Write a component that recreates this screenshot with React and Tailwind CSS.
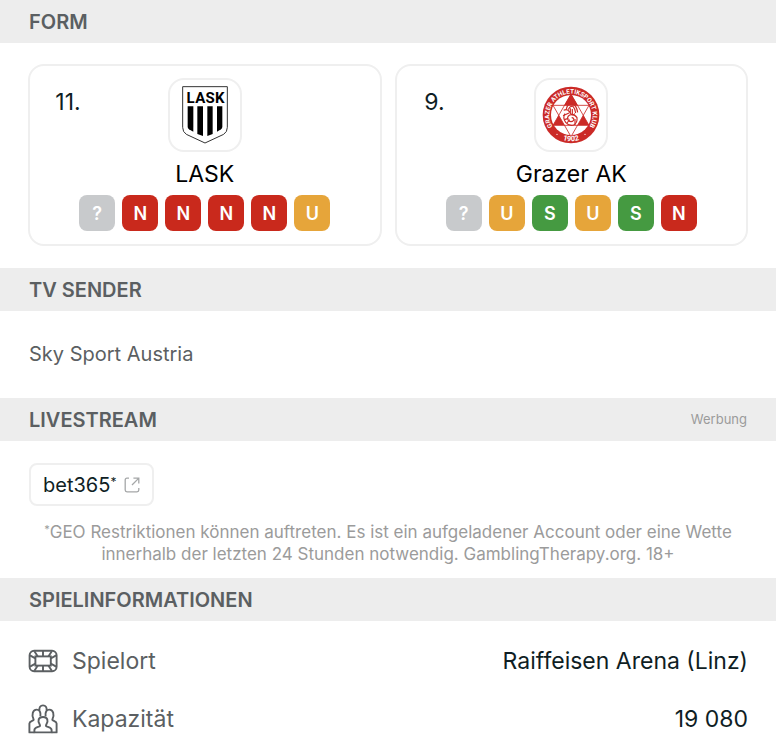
import React from "react";

const teams = [
  { rank: "11.", name: "LASK", logo: LaskLogo, form: ["?", "N", "N", "N", "N", "U"] },
  { rank: "9.", name: "Grazer AK", logo: GakLogo, form: ["?", "U", "S", "U", "S", "N"] },
];

const formColors = {
  "?": "bg-[#c8cacc]",
  N: "bg-[#c9291c]",
  U: "bg-[#e6a53a]",
  S: "bg-[#459a41]",
};

function LaskLogo() {
  return (
    <svg viewBox="48 33 144 180" className="w-12 h-[60px]" role="img" aria-label="LASK">
      <path
        d="M53 38H187V160Q187 174 176 181L120 207L64 181Q53 174 53 160Z"
        fill="#fff"
        stroke="#333"
        strokeWidth="3"
      />
      <text
        x="77 106 135 164"
        y="87"
        textAnchor="middle"
        fontFamily="Roboto, sans-serif"
        fontWeight="700"
        fontSize="45"
      >
        LASK
      </text>
      <path d="M68 97H85V173L72 166Q68 163 68 158Z" />
      <path d="M97 97H114V186L97 180Z" />
      <path d="M127 97H143V180L127 186Z" />
      <path d="M156 97H172V158Q172 163 168 166L156 173Z" />
    </svg>
  );
}

function GakLogo() {
  return (
    <svg viewBox="-87 -87 174 174" className="w-[58px] h-[58px]" role="img" aria-label="Grazer AK">
      <defs>
        <path id="gak-top" d="M-50 42A65 65 0 1 1 50 42" />
        <path id="gak-bottom" d="M-40 68A79 79 0 0 0 40 68" />
      </defs>
      <circle r="85" fill="#cb2a27" />
      <circle r="60" fill="#fff" />
      <path d="M0-63L54 31H-54Z" fill="#cb2a27" />
      <path d="M-54-29H54L0 65Z" fill="#fff" stroke="#cb2a27" strokeWidth="2.5" />
      <path d="M-54 31H54" stroke="#cb2a27" strokeWidth="2.5" />
      <path d="M0-63L54 31M0-63L-54 31" stroke="#cb2a27" strokeWidth="2.5" />
      <path d="M-20-29L0-62L20-29Z" fill="#cb2a27" />
      <g fill="none" stroke="#cb2a27" strokeWidth="3.5">
        <path d="M-14-18Q-10-36 4-34Q16-30 20-8M-8-16Q-4-28 6-26Q12-20 14-6" />
        <path d="M-18-4Q-26 8-16 22Q-6 34 8 30Q20 24 18 8Q10-4-4 0Q-14 6-8 16Q0 24 8 16Q10 8 2 8" />
        <path d="M-22-14Q-10-20-4-8T12-4M-24 2L-6-6M-20 14L-8 10M-2-20V-4M4-18V0M-12 24L-4 14M12 30V12" />
      </g>
      <g fill="#fff" fontFamily="Roboto, sans-serif" fontWeight="700">
        <text fontSize="19" textAnchor="middle">
          <textPath href="#gak-top" startOffset="50%">GRAZER ATHLETIKSPORT KLUB</textPath>
        </text>
        <text fontSize="22" textAnchor="middle">
          <textPath href="#gak-bottom" startOffset="50%">1902</textPath>
        </text>
      </g>
      <circle cx="-42" cy="58" r="2" fill="#fff" />
      <circle cx="42" cy="58" r="2" fill="#fff" />
    </svg>
  );
}

function StadiumIcon() {
  return (
    <svg
      viewBox="0 0 30 30"
      className="w-[30px] h-[30px]"
      fill="none"
      stroke="currentColor"
      strokeWidth="1.9"
      aria-hidden="true"
    >
      <rect x="1.6" y="4.8" width="27" height="20.4" rx="4.5" />
      <rect x="7.4" y="10.4" width="15.4" height="9.2" />
      <path d="M15 4.8v5.6M15 19.6v5.6" />
      <path d="M2 9.4l5.4 3M6.4 5.2l3.4 5.2M28.2 9.4l-5.4 3M23.8 5.2l-3.4 5.2" />
      <path d="M2 20.6l5.4-3M6.4 24.8l3.4-5.2M28.2 20.6l-5.4-3M23.8 24.8l-3.4-5.2" />
    </svg>
  );
}

function CrowdIcon() {
  return (
    <svg
      viewBox="0 0 30 30"
      className="w-[30px] h-[30px]"
      fill="none"
      stroke="currentColor"
      strokeWidth="1.9"
      strokeLinejoin="round"
      aria-hidden="true"
    >
      <path d="M11.4 6.4C11 3.2 12.4 1.4 15 1.4s4 1.8 3.6 5" />
      <path d="M6.4 28.4H1.4V19.6c0-2 2-2.4 3.6-3.2.8-.4.8-1.2.3-2C3.8 11.2 4.4 5.6 8.6 5.6c2.8 0 4.4 2.4 3.8 6.8" />
      <path d="M23.6 28.4h5V19.6c0-2-2-2.4-3.6-3.2-.8-.4-.8-1.2-.3-2C26.2 11.2 25.6 5.6 21.4 5.6c-2.8 0-4.4 2.4-3.8 6.8" />
      <path d="M6.4 28.4v-2.4c0-2.6 3-2.8 5-3.6.8-.4.8-1.2.3-2C9.4 16.8 10.2 13 15 13s5.6 3.8 3.3 7.4c-.5.8-.5 1.6.3 2 2 .8 5 1 5 3.6v2.4z" />
    </svg>
  );
}

function ExternalIcon() {
  return (
    <svg
      viewBox="0 0 16 16"
      className="w-4 h-4 text-[#a5a7a8]"
      fill="none"
      stroke="currentColor"
      strokeWidth="1.3"
      aria-hidden="true"
    >
      <path d="M5 1.2H3Q1.2 1.2 1.2 3V13Q1.2 14.8 3 14.8H13Q14.8 14.8 14.8 13V11" />
      <path d="M8 8L14.6 1.4M9.4 1.2H14.8V6.6" />
    </svg>
  );
}

function SectionHeader({ title, note }) {
  return (
    <div className="flex items-center justify-between bg-[#ededed] h-[43px] px-[29px]">
      <h2 className="text-[20px] font-semibold text-[#5b5f62]">{title}</h2>
      {note && <span className="text-[13px] text-[#9b9b9b]">{note}</span>}
    </div>
  );
}

function TeamCard({ team }) {
  const Logo = team.logo;

  return (
    <article className="grid grid-cols-[1fr_auto_1fr] border-2 border-[#efefef] rounded-2xl px-4 pt-3 pb-[13px]">
      <span className="w-11 mt-[10px] text-center text-[23px] leading-7 text-[#0f1e24]">{team.rank}</span>

      <div className="flex items-center justify-center w-[74px] h-[74px] border-2 border-[#efefef] rounded-2xl">
        <Logo />
      </div>

      <h3 className="col-span-3 mt-2 text-center text-[23px] leading-7 text-black">{team.name}</h3>

      <ul className="col-span-3 flex justify-center gap-[7px] mt-[7px]">
        {team.form.map((result, i) => (
          <li
            key={i}
            className={`flex items-center justify-center w-9 h-9 rounded-lg text-[18px] font-semibold text-white ${formColors[result]}`}
          >
            {result}
          </li>
        ))}
      </ul>
    </article>
  );
}

function InfoRow({ icon, label, value }) {
  return (
    <div className="flex items-center justify-between h-[58px]">
      <dt className="flex items-center gap-[14px] text-[23px] text-[#5b5f62]">
        {icon}
        {label}
      </dt>
      <dd className="text-[23px] text-[#0f1e24]">{value}</dd>
    </div>
  );
}

function App() {
  return (
    <main className="min-h-screen bg-white font-['Inter',sans-serif]">

      <section>
        <SectionHeader title="FORM" />
        <div className="grid grid-cols-2 gap-[13px] px-7 pt-[21px] pb-[22px]">
          {teams.map((team) => (
            <TeamCard key={team.name} team={team} />
          ))}
        </div>
      </section>

      <section>
        <SectionHeader title="TV SENDER" />
        <p className="px-[29px] pt-[29px] pb-[30px] text-[20px] leading-7 text-[#5b5f62]">Sky Sport Austria</p>
      </section>

      <section>
        <SectionHeader title="LIVESTREAM" note="Werbung" />
        <div className="px-[29px] pt-[22px] pb-[13px]">
          <a
            href="#bet365"
            className="inline-flex items-center gap-2 h-[43px] px-3 border-2 border-[#efefef] rounded-lg text-[20px] text-[#0f1e24]"
          >
            <span>
              bet365<sup className="text-[12px]">*</sup>
            </span>
            <ExternalIcon />
          </a>
          <p className="mt-[15px] px-2 text-center text-[17px] leading-[22px] text-[#9b9b9b]">
            <sup className="text-[11px]">*</sup>GEO Restriktionen können auftreten. Es ist ein
            aufgeladener Account oder eine Wette innerhalb der letzten 24 Stunden notwendig.
            GamblingTherapy.org. 18+
          </p>
        </div>
      </section>

      <section>
        <SectionHeader title="SPIELINFORMATIONEN" />
        <dl className="px-7 pt-[11px]">
          <InfoRow icon={<StadiumIcon />} label="Spielort" value="Raiffeisen Arena (Linz)" />
          <InfoRow icon={<CrowdIcon />} label="Kapazität" value="19 080" />
        </dl>
      </section>

    </main>
  );
}

export default App;
